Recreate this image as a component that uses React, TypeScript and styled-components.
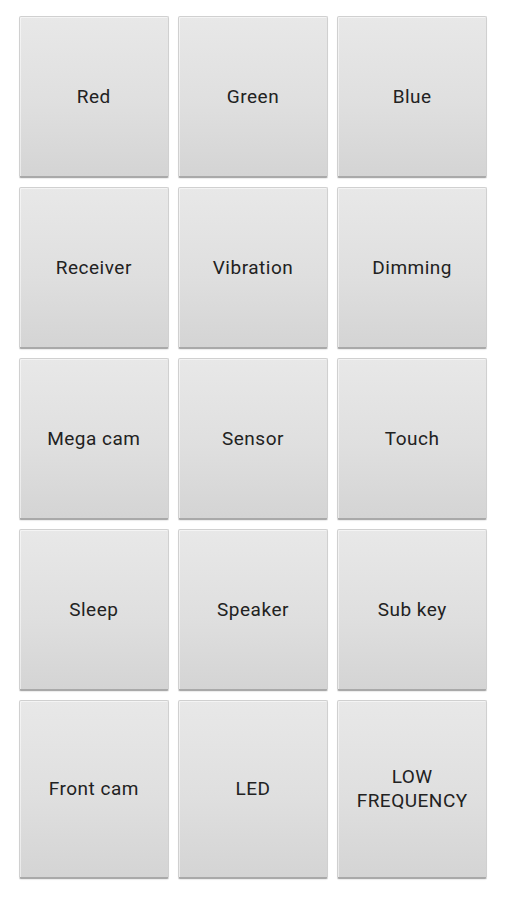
import React from "react";
import styled, { createGlobalStyle } from "styled-components";

const Global = createGlobalStyle`
  html, body { margin: 0; padding: 0; background: #ffffff; }
  body { font-family: Roboto, "Noto Sans", sans-serif; }
`;

const Grid = styled.div`
  box-sizing: border-box;
  width: 506px;
  height: 900px;
  padding: 16px 19px 21px 19px;
  display: grid;
  grid-template-columns: repeat(3, 1fr);
  grid-template-rows: 162px 162px 162px 162px 1fr;
  column-gap: 9.5px;
  row-gap: 9px;
`;

const Tile = styled.button`
  box-sizing: border-box;
  margin: 0;
  padding: 0 6px;
  border: 1px solid #d0d0d0;
  border-bottom: 2px solid #a9a9a9;
  border-radius: 2px;
  background: linear-gradient(to bottom, #e8e8e8 0%, #dfdfdf 55%, #d4d4d4 100%);
  box-shadow: inset 1px 1px 0 rgba(255, 255, 255, 0.5), 0 1px 1px rgba(0, 0, 0, 0.08);
  display: flex;
  align-items: center;
  justify-content: center;
  text-align: center;
  font-family: Roboto, "Noto Sans", sans-serif;
  font-size: 19px;
  letter-spacing: 0.5px;
  line-height: 24px;
  color: #222222;
  white-space: pre-line;
`;

const labels = [
  "Red", "Green", "Blue",
  "Receiver", "Vibration", "Dimming",
  "Mega cam", "Sensor", "Touch",
  "Sleep", "Speaker", "Sub key",
  "Front cam", "LED", "LOW\nFREQUENCY",
];

export default function App() {
  return (
    <>
      <Global />
      <Grid>
        {labels.map((l) => (
          <Tile key={l}>{l}</Tile>
        ))}
      </Grid>
    </>
  );
}
